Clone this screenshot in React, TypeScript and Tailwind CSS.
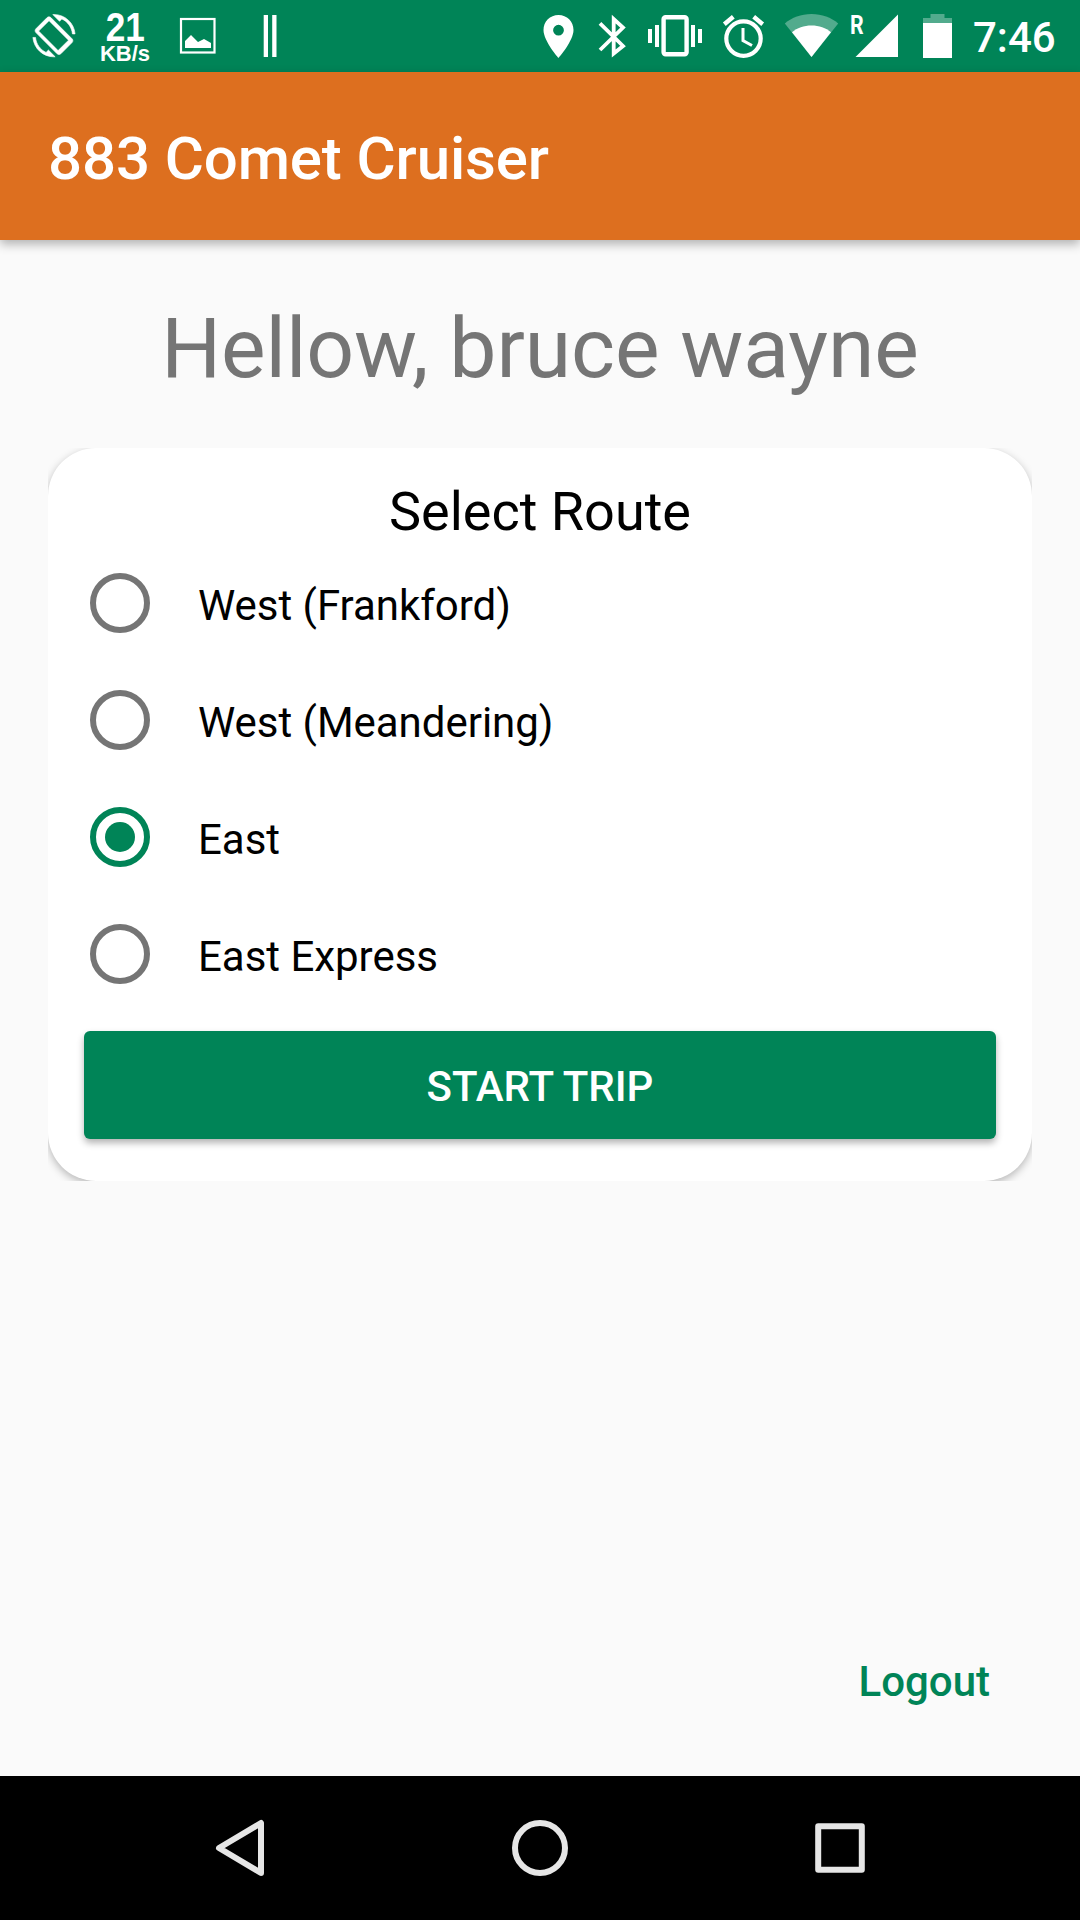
import React from "react";

const routes = ["West (Frankford)", "West (Meandering)", "East", "East Express"];

function StatusBar() {
  return (
    <header className="flex h-[72px] items-start bg-[#008457] text-white">
      <svg className="ml-[30px] h-[72px] w-[48px]" viewBox="30 0 48 72" fill="currentColor">
        <g transform="translate(32.8 14.5) scale(1.765)" stroke="currentColor" strokeWidth="0.35">
          <path d="M16.48 2.52c3.27 1.55 5.61 4.72 5.97 8.48h1.5C23.44 4.84 18.29 0 12 0l-.66.03 3.81 3.81 1.33-1.32zm-6.25-.77c-.59-.59-1.54-.59-2.12 0L1.75 8.11c-.59.59-.59 1.54 0 2.12l12.02 12.02c.59.59 1.54.59 2.12 0l6.36-6.36c.59-.59.59-1.54 0-2.12L10.23 1.75zm4.1 18.7L3.3 9.4l5.9-5.9 11.03 11.03-5.9 5.92zm-6.81 1.03C4.25 19.94 1.91 16.76 1.55 13H.05C.56 19.16 5.71 24 12 24l.66-.03-3.81-3.81-1.33 1.32z" />
        </g>
      </svg>
      <div className="ml-[20px] flex h-[72px] w-[54px] flex-col items-center pt-[9px] font-['Liberation_Sans'] font-bold">
        <span className="origin-center scale-x-[0.88] text-[40px] leading-[36px]">21</span>
        <span className="mt-px text-[22px] leading-[16px]">KB/s</span>
      </div>
      <svg className="ml-[25px] h-[72px] w-[42px]" viewBox="177 0 42 72" fill="currentColor">
        <rect x="181" y="19" width="33.5" height="33.5" fill="none" stroke="currentColor" strokeWidth="2.2" />
        <path d="M185 48V41L191 35L198 42L204 39L211 43V48Z" />
      </svg>
      <svg className="ml-[39px] h-[72px] w-[24px]" viewBox="258 0 24 72" fill="currentColor">
        <rect x="263.7" y="15" width="4.3" height="42" />
        <rect x="272.2" y="15" width="4.3" height="42" />
      </svg>
      <svg className="ml-[256px] h-[72px] w-[42px]" viewBox="538 0 42 72" fill="currentColor">
        <path fillRule="evenodd" d="M558.5 15C550 15 543.5 21.5 543.5 30C543.5 41 558.5 58 558.5 58S573.5 41 573.5 30C573.5 21.5 567 15 558.5 15ZM558.5 24.8A5.4 5.4 0 1 1 558.5 35.6A5.4 5.4 0 1 1 558.5 24.8Z" />
      </svg>
      <svg className="ml-[16px] h-[72px] w-[34px]" viewBox="596 0 34 72" fill="none" stroke="currentColor" strokeWidth="3.8">
        <path d="M600 23.4L623 46L613.7 53.5V19L623 27.5L600 50" strokeMiterlimit="10" />
      </svg>
      <svg className="ml-[16px] h-[72px] w-[60px]" viewBox="646 0 60 72" fill="currentColor">
        <rect x="663.6" y="17.2" width="23" height="37" rx="2" fill="none" stroke="currentColor" strokeWidth="4.4" />
        <path d="M648 29h4v14h-4zM655 25h4v22h-4zM691 25h4v22h-4zM698 29h4v14h-4z" />
      </svg>
      <svg className="ml-[14px] h-[72px] w-[46px]" viewBox="720 0 46 72" fill="none" stroke="currentColor">
        <circle cx="743.5" cy="38.6" r="17.2" strokeWidth="4.2" />
        <path d="M743 28V40.5L752 45.5" strokeWidth="3" />
        <path d="M724.3 24.2L733.3 16.7M753.7 16.7L762.7 24.2" strokeWidth="4.4" />
      </svg>
      <svg className="ml-[18px] h-[72px] w-[56px]" viewBox="784 0 56 72" fill="currentColor">
        <path opacity=".32" d="M811.5 57L784.8 23.5C792 17.5 801 14 811.5 14S831 17.5 838.2 23.5Z" />
        <path d="M811.5 57L792 32.3C797 28 804 25.6 811.5 25.6S826 28 831 32.3Z" />
      </svg>
      <span className="ml-[10px] mt-[10px] w-[16px] origin-left scale-x-[0.82] text-[26px] leading-[30px] font-bold">R</span>
      <svg className="-ml-[11px] h-[72px] w-[44px]" viewBox="855 0 44 72" fill="currentColor">
        <path d="M898 14.5V57H855.5Z" />
      </svg>
      <svg className="ml-[22px] h-[72px] w-[33px]" viewBox="921 0 33 72" fill="currentColor">
        <path opacity=".32" d="M930.5 14H944.5V18H952V23H923V18H930.5Z" />
        <rect x="923" y="23" width="29" height="35" />
      </svg>
      <span className="ml-[19px] mt-[13px] text-[42px] leading-[50px] font-medium">7:46</span>
    </header>
  );
}

function Radio({ label, checked }: { label: string; checked: boolean }) {
  return (
    <label className="flex h-[117px] items-center">
      <span
        className={
          checked
            ? "flex size-[60px] items-center justify-center rounded-full border-[6px] border-[#008457]"
            : "flex size-[60px] items-center justify-center rounded-full border-[6px] border-[#757575]"
        }
      >
        {checked && <span className="size-[30px] rounded-full bg-[#008457]" />}
      </span>
      <span className="ml-[48px] pt-[7px] text-[42px] leading-[50px] tracking-[-0.03px] text-black">{label}</span>
    </label>
  );
}

function NavBar() {
  return (
    <nav className="grid h-[144px] grid-cols-[480px_120px_480px] bg-black text-[#e6e6e6]">
      <svg className="ml-[210px] h-[144px] w-[60px]" viewBox="210 1776 60 144" fill="none" stroke="currentColor" strokeWidth="6" strokeLinejoin="round">
        <path d="M261 1823V1873L219 1848Z" />
      </svg>
      <svg className="h-[144px] w-[120px]" viewBox="480 1776 120 144" fill="none" stroke="currentColor" strokeWidth="6">
        <circle cx="540" cy="1848" r="25" />
      </svg>
      <svg className="ml-[210px] h-[144px] w-[60px]" viewBox="810 1776 60 144" fill="none" stroke="currentColor" strokeWidth="6" strokeLinejoin="round">
        <rect x="818.2" y="1826.2" width="43.6" height="43.6" />
      </svg>
    </nav>
  );
}

export default function App() {
  return (
    <div className="flex h-[1920px] w-[1080px] flex-col overflow-hidden bg-[#fafafa] font-[Roboto,sans-serif]">
      <StatusBar />
      <div className="flex h-[168px] items-center bg-[#dd6f1f] px-[48px] shadow-[0_4px_10px_rgba(0,0,0,0.3)]">
        <h1 className="pt-[5px] text-[60px] leading-[70px] font-medium tracking-[-0.12px] text-white">883 Comet Cruiser</h1>
      </div>
      <main className="flex flex-1 flex-col px-[48px]">
        <p className="mt-[60px] text-center text-[84px] leading-[98px] tracking-[-0.06px] text-[#757575]">Hellow, bruce wayne</p>
        <div className="mt-[50px] h-[733px] overflow-hidden">
          <section className="flex h-[733px] flex-col rounded-[48px] bg-white px-[36px] shadow-[0_3px_9px_rgba(0,0,0,0.27)]">
            <h2 className="mt-[32px] text-center text-[54px] leading-[64px] text-black">Select Route</h2>
            <div className="pl-[6px]">
              {routes.map((route) => (
                <Radio key={route} label={route} checked={route === "East"} />
              ))}
            </div>
            <button className="mt-[19px] h-[108px] shrink-0 rounded-[6px] bg-[#008457] pt-[3px] text-[42px] leading-[50px] font-medium text-white shadow-[0_4px_7px_rgba(0,0,0,0.3)]">
              START TRIP
            </button>
          </section>
        </div>
        <button className="mt-auto mr-[42px] mb-[69px] self-end text-[42px] leading-[50px] font-medium text-[#008457]">Logout</button>
      </main>
      <NavBar />
    </div>
  );
}
